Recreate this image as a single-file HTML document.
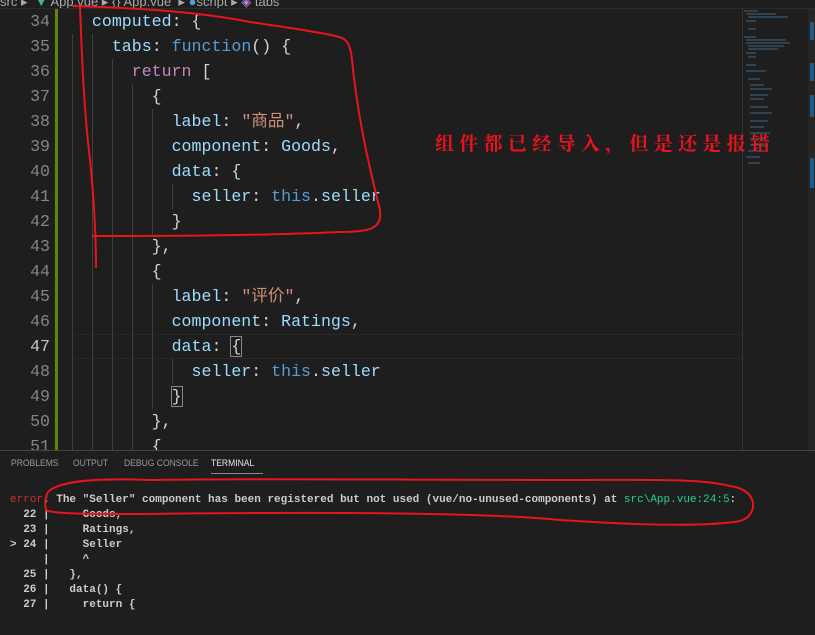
<!DOCTYPE html>
<html><head><meta charset="utf-8"><style>
body{margin:0;width:815px;height:634px;background:#1e1e1e;overflow:hidden;position:relative;font-family:"Liberation Mono","Noto Sans CJK SC",monospace}
.bc{position:absolute;top:-6px;left:0;height:14px;font:13px "Liberation Sans",sans-serif;color:#a9a9a9;white-space:pre}
.ln{position:absolute;left:0;width:50px;text-align:right;color:#858585;font-size:16.6px;height:25px;line-height:25px}
.cl{position:absolute;left:72px;font-size:16.6px;height:25px;line-height:25px;white-space:pre;color:#d4d4d4}
.g{position:absolute;width:1px;background:#404040}
.p{color:#9cdcfe}.k{color:#569cd6}.r{color:#c586c0}.s{color:#ce9178}.f{color:#dcdcaa}
.tab{position:absolute;top:458px;font:9px "Liberation Sans",sans-serif;color:#9a9a9a;transform:scaleX(.95);transform-origin:left}
.t{position:absolute;left:10px;font:bold 11px "Liberation Mono",monospace;color:#cccccc;white-space:pre;height:15px;line-height:15px}
</style></head><body>
<div class="bc">src ▸  <span style="color:#41b883">▼</span> App.vue ▸ {} App.vue  ▸ <span style="color:#4aa3df">●</span>script ▸ <span style="color:#b180d7">◈</span> tabs</div>
<div style="position:absolute;left:0;top:8px;width:815px;height:1px;background:#2b2b2b"></div>
<div style="position:absolute;left:55px;top:9px;width:3px;height:441px;background:#5a8a00"></div>
<div style="position:absolute;left:72px;top:334px;width:670px;height:23px;border:1px solid #282828;border-left:0"></div>
<div class="g" style="left:72px;top:34px;height:416px"></div>
<div class="g" style="left:92px;top:34px;height:416px"></div>
<div class="g" style="left:112px;top:59px;height:391px"></div>
<div class="g" style="left:132px;top:84px;height:366px"></div>
<div class="g" style="left:152px;top:109px;height:125px"></div>
<div class="g" style="left:172px;top:184px;height:25px"></div>
<div class="g" style="left:152px;top:284px;height:125px"></div>
<div class="g" style="left:172px;top:359px;height:25px"></div>
<div style="position:absolute;left:742px;top:9px;width:1px;height:441px;background:#333"></div>
<div style="position:absolute;left:808px;top:9px;width:7px;height:441px;background:#252526"></div>
<div style="position:absolute;left:810px;top:22px;width:4px;height:18px;background:#1b5a8a"></div>
<div style="position:absolute;left:810px;top:63px;width:4px;height:18px;background:#1b5a8a"></div>
<div style="position:absolute;left:810px;top:95px;width:4px;height:22px;background:#1b5a8a"></div>
<div style="position:absolute;left:810px;top:158px;width:4px;height:30px;background:#1b5a8a"></div>
<svg style="position:absolute;left:742px;top:9px" width="66" height="160"><g stroke="#4a7a9a" stroke-width="1" opacity=".8">
<path d="M2 2h14M4 5h30M6 8h40M4 12h10M6 20h8M2 28h12M4 31h40M4 34h44M6 37h36M6 40h30M4 44h10M6 48h8M4 56h10M4 62h20M6 70h12M8 76h14M8 80h22M8 86h18M8 90h14M8 98h18M8 104h22M8 112h18M8 118h14M8 124h20M8 130h14M8 136h18M6 142h20M4 148h14M6 154h12"/></g></svg>
<div class="ln" style="top:9px">34</div><div class="ln" style="top:34px">35</div><div class="ln" style="top:59px">36</div><div class="ln" style="top:84px">37</div><div class="ln" style="top:109px">38</div><div class="ln" style="top:134px">39</div><div class="ln" style="top:159px">40</div><div class="ln" style="top:184px">41</div><div class="ln" style="top:209px">42</div><div class="ln" style="top:234px">43</div><div class="ln" style="top:259px">44</div><div class="ln" style="top:284px">45</div><div class="ln" style="top:309px">46</div><div class="ln" style="top:334px;color:#c6c6c6">47</div><div class="ln" style="top:359px">48</div><div class="ln" style="top:384px">49</div><div class="ln" style="top:409px">50</div><div class="ln" style="top:434px">51</div>
<div class="cl" style="top:9px">  <span class="p">computed</span>: {</div>
<div class="cl" style="top:34px">    <span class="p">tabs</span>: <span class="k">function</span>() {</div>
<div class="cl" style="top:59px">      <span class="r">return</span> [</div>
<div class="cl" style="top:84px">        {</div>
<div class="cl" style="top:109px">          <span class="p">label</span>: <span class="s">"商品"</span>,</div>
<div class="cl" style="top:134px">          <span class="p">component</span>: <span class="p">Goods</span>,</div>
<div class="cl" style="top:159px">          <span class="p">data</span>: {</div>
<div class="cl" style="top:184px">            <span class="p">seller</span>: <span class="k">this</span>.<span class="p">seller</span></div>
<div class="cl" style="top:209px">          }</div>
<div class="cl" style="top:234px">        },</div>
<div class="cl" style="top:259px">        {</div>
<div class="cl" style="top:284px">          <span class="p">label</span>: <span class="s">"评价"</span>,</div>
<div class="cl" style="top:309px">          <span class="p">component</span>: <span class="p">Ratings</span>,</div>
<div class="cl" style="top:334px">          <span class="p">data</span>: <span style="outline:1px solid #888">{</span></div>
<div class="cl" style="top:359px">            <span class="p">seller</span>: <span class="k">this</span>.<span class="p">seller</span></div>
<div class="cl" style="top:384px">          <span style="outline:1px solid #888">}</span></div>
<div class="cl" style="top:409px">        },</div>
<div class="cl" style="top:434px">        {</div>
<div style="position:absolute;left:0;top:450px;width:815px;height:184px;background:#1e1e1e;border-top:1px solid #444"></div>
<div class="tab" style="left:11px">PROBLEMS</div><div class="tab" style="left:73px">OUTPUT</div><div class="tab" style="left:124px">DEBUG CONSOLE</div><div class="tab" style="left:211px;color:#e7e7e7">TERMINAL</div>
<div style="position:absolute;left:211px;top:473px;width:52px;height:1px;background:#888"></div>
<div class="t" style="top:493px"><span style="color:#cd3131;font-weight:normal">error</span>: The "Seller" component has been registered but not used (vue/no-unused-components) at <span style="color:#23d18b;font-weight:normal">src\App.vue:24:5</span>:</div>
<div class="t" style="top:508px">  22 |     Goods,</div>
<div class="t" style="top:523px">  23 |     Ratings,</div>
<div class="t" style="top:538px">&gt; 24 |     Seller</div>
<div class="t" style="top:553px">     |     ^</div>
<div class="t" style="top:568px">  25 |   },</div>
<div class="t" style="top:583px">  26 |   data() {</div>
<div class="t" style="top:598px">  27 |     return {</div>
<div style="position:absolute;left:435px;top:129px;color:#e8141e;font:bold 19px 'Noto Serif CJK SC',serif;letter-spacing:5.3px;white-space:nowrap">组件都已经导入，但是还是报错</div>
<svg style="position:absolute;left:0;top:0" width="815" height="634" fill="none" stroke="#e8141e" stroke-width="2">
<path d="M72 6 C140 8 200 12 250 22 C290 28 320 32 335 36 C345 38 350 40 352 60 C358 120 370 170 380 210 C382 228 372 232 340 232 C250 236 150 236 92 236"/>
<path d="M80 7 C82 60 84 110 90 160 C95 210 96 240 96 268"/>
<path d="M48 492 C60 480 100 478 150 480 C250 478 400 480 560 480 C640 480 700 478 730 486 C760 490 758 516 740 521 C700 528 620 524 560 520 C480 512 300 512 140 514 C90 514 52 514 46 510 C44 502 46 496 48 492"/>
</svg>
</body></html>
